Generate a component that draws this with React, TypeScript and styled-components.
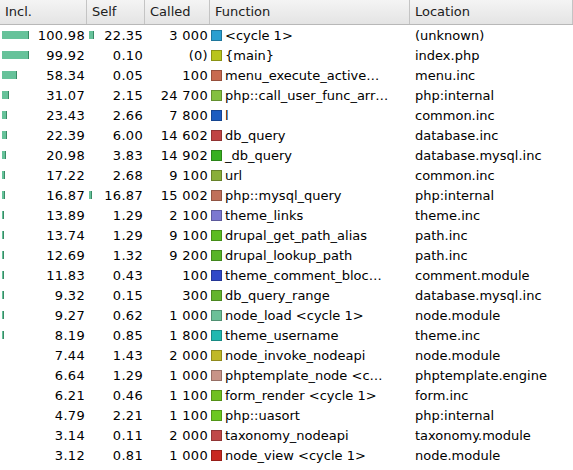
import React from "react";
import styled, { createGlobalStyle } from "styled-components";

const Global = createGlobalStyle`
  body { margin: 0; background: #fff; font-family: "DejaVu Sans", sans-serif; font-size: 13px; color: #000; }
`;

type Row = { incl: number; self: number; called: string; fn: string; color: string; loc: string };

const rows: Row[] = [
  { incl: 100.98, self: 22.35, called: "3 000", fn: "<cycle 1>", color: "#2a9fd0", loc: "(unknown)" },
  { incl: 99.92, self: 0.1, called: "(0)", fn: "{main}", color: "#b8c41c", loc: "index.php" },
  { incl: 58.34, self: 0.05, called: "100", fn: "menu_execute_active…", color: "#c86a50", loc: "menu.inc" },
  { incl: 31.07, self: 2.15, called: "24 700", fn: "php::call_user_func_arr…", color: "#84c040", loc: "php:internal" },
  { incl: 23.43, self: 2.66, called: "7 800", fn: "l", color: "#1c5cc0", loc: "common.inc" },
  { incl: 22.39, self: 6.0, called: "14 602", fn: "db_query", color: "#c04444", loc: "database.inc" },
  { incl: 20.98, self: 3.83, called: "14 902", fn: "_db_query", color: "#38b020", loc: "database.mysql.inc" },
  { incl: 17.22, self: 2.68, called: "9 100", fn: "url", color: "#8aae3a", loc: "common.inc" },
  { incl: 16.87, self: 16.87, called: "15 002", fn: "php::mysql_query", color: "#c0705a", loc: "php:internal" },
  { incl: 13.89, self: 1.29, called: "2 100", fn: "theme_links", color: "#7c78d0", loc: "theme.inc" },
  { incl: 13.74, self: 1.29, called: "9 100", fn: "drupal_get_path_alias", color: "#5cbc20", loc: "path.inc" },
  { incl: 12.69, self: 1.32, called: "9 200", fn: "drupal_lookup_path", color: "#58b428", loc: "path.inc" },
  { incl: 11.83, self: 0.43, called: "100", fn: "theme_comment_bloc…", color: "#3048c8", loc: "comment.module" },
  { incl: 9.32, self: 0.15, called: "300", fn: "db_query_range", color: "#64b42c", loc: "database.mysql.inc" },
  { incl: 9.27, self: 0.62, called: "1 000", fn: "node_load <cycle 1>", color: "#6cc098", loc: "node.module" },
  { incl: 8.19, self: 0.85, called: "1 800", fn: "theme_username", color: "#20b8b0", loc: "theme.inc" },
  { incl: 7.44, self: 1.43, called: "2 000", fn: "node_invoke_nodeapi", color: "#c0b828", loc: "node.module" },
  { incl: 6.64, self: 1.29, called: "1 000", fn: "phptemplate_node <c…", color: "#c89488", loc: "phptemplate.engine" },
  { incl: 6.21, self: 0.46, called: "1 100", fn: "form_render <cycle 1>", color: "#70c020", loc: "form.inc" },
  { incl: 4.79, self: 2.21, called: "1 100", fn: "php::uasort", color: "#6cc820", loc: "php:internal" },
  { incl: 3.14, self: 0.11, called: "2 000", fn: "taxonomy_nodeapi", color: "#c04848", loc: "taxonomy.module" },
  { incl: 3.12, self: 0.81, called: "1 000", fn: "node_view <cycle 1>", color: "#c82820", loc: "node.module" },
  { incl: 3.02, self: 0.02, called: "1 000", fn: "node_view_cache", color: "#60a0c0", loc: "node.module" },
];

const COLS = "87px 58px 65px 200px 1fr";

const Table = styled.div`
  width: 573px;
  height: 470px;
  overflow: hidden;
`;

const Header = styled.div`
  display: grid;
  grid-template-columns: ${COLS};
  height: 24px;
  background: linear-gradient(#f4f4f4, #e4e4e4);
  border-bottom: 1px solid #b8b8b8;
`;

const HeadCell = styled.div`
  padding: 4px 5px 0;
  border-right: 1px solid #c4c4c4;
  color: #202020;
  white-space: nowrap;
`;

const RowLine = styled.div`
  display: grid;
  grid-template-columns: ${COLS};
  height: 20px;
  align-items: center;
  white-space: nowrap;
`;

const NumCell = styled.div`
  display: flex;
  align-items: center;
  padding: 0 2px;
  overflow: hidden;
`;

const Bar = styled.div<{ $w: number }>`
  width: ${(p) => p.$w}px;
  height: 8px;
  background: #66c29a;
  border-right: 1px solid #3a8a66;
  flex: none;
`;

const Num = styled.span`
  margin-left: auto;
  letter-spacing: 0.3px;
`;

const FnCell = styled.div`
  display: flex;
  align-items: center;
  gap: 3px;
  padding-left: 1px;
  overflow: hidden;
`;

const Swatch = styled.span<{ $c: string }>`
  width: 9px;
  height: 9px;
  background: ${(p) => p.$c};
  border: 1px solid rgba(0,0,0,0.25);
  flex: none;
`;

const LocCell = styled.div`
  padding-left: 5px;
`;

const barW = (v: number) => Math.max(1, Math.round((v - 10) * 0.29));

export default function App() {
  return (
    <Table>
      <Global />
      <Header>
        <HeadCell>Incl.</HeadCell>
        <HeadCell>Self</HeadCell>
        <HeadCell>Called</HeadCell>
        <HeadCell>Function</HeadCell>
        <HeadCell>Location</HeadCell>
      </Header>
      {rows.map((r, i) => (
        <RowLine key={i}>
          <NumCell>
            {r.incl > 8 && <Bar $w={barW(r.incl)} />}
            <Num>{r.incl.toFixed(2)}</Num>
          </NumCell>
          <NumCell>
            {r.self > 10 && <Bar $w={barW(r.self)} />}
            <Num>{r.self.toFixed(2)}</Num>
          </NumCell>
          <NumCell>
            <Num>{r.called}</Num>
          </NumCell>
          <FnCell>
            <Swatch $c={r.color} />
            {r.fn}
          </FnCell>
          <LocCell>{r.loc}</LocCell>
        </RowLine>
      ))}
    </Table>
  );
}
